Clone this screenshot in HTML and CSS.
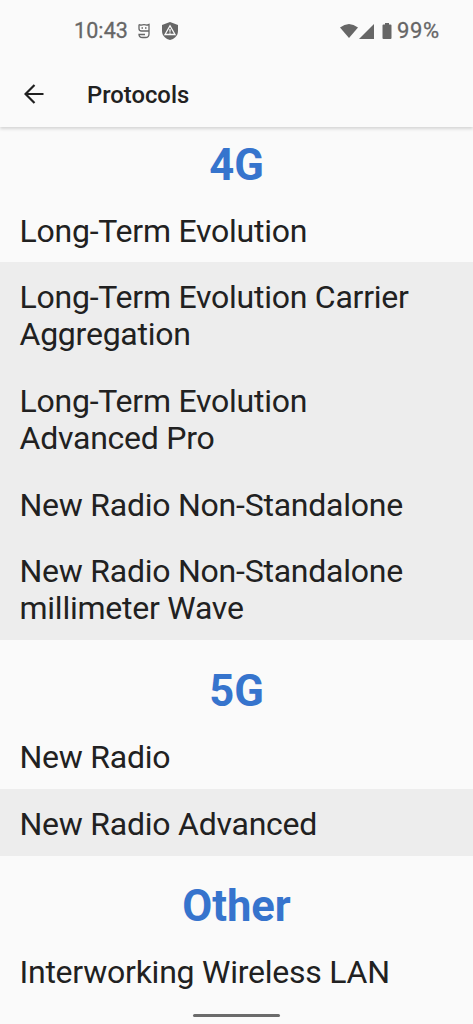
FILE: index.html
```html
<!DOCTYPE html>
<html lang="en">
<head>
<meta charset="utf-8">
<title>Protocols</title>
<link rel="stylesheet" href="styles.css">
</head>
<body>
<div class="status">
  <span class="time">10:43</span>
  <svg class="s-icon" width="12" height="16" viewBox="0 0 12 16" fill="none" stroke="#666" stroke-width="1.300"><path d="M1 1.500L3 2.200Q6 1 9 2.200L11 1.500V7.500M1 1.500V5.500Q1 8 3.500 8H11V11Q11 14.500 7.500 14.500H4.500Q1 14.500 1 11.500H7"/><path d="M3.500 5h1.500M7 5h1.500"/></svg>
  <svg class="shield" width="16" height="18" viewBox="0 0 16 18"><path fill="#666" d="M8 0l8 3v6c0 5-4 8-8 9-4-1-8-4-8-9V3z"/><path fill="none" stroke="#fafafa" stroke-width="1.300" d="M8 3.800l5 8.700H3zM8 7v2.700M8 10.400v1"/></svg>
  <span class="spacer"></span>
  <svg class="wifi" width="18" height="14" viewBox="0 0 18 14"><path fill="#666" d="M0 3.500Q9-3.500 18 3.500L9 14z"/></svg>
  <svg class="signal" width="15" height="15" viewBox="0 0 15 15"><path fill="#666" d="M15 0v15H0z"/></svg>
  <svg class="battery" width="10" height="16" viewBox="0 0 10 16"><path fill="#666" d="M3 0h4v1.500h1.500q1 0 1 1V15q0 1-1 1h-7q-1 0-1-1V2.500q0-1 1-1H3z"/></svg>
  <span class="percent">99%</span>
</div>
<header class="appbar">
  <svg class="back" width="20" height="20" viewBox="0 0 20 20" fill="none" stroke="#202020" stroke-width="2.200"><path d="M19.500 10H2M10.500 1L1.500 10l9 9"/></svg>
  <h1 class="title">Protocols</h1>
</header>
<main class="list">
  <h2 class="head first">4G</h2>
  <p class="row">Long-Term Evolution</p>
  <div class="shade">
    <p class="row">Long-Term Evolution Carrier Aggregation</p>
    <p class="row">Long-Term Evolution<br>Advanced Pro</p>
    <p class="row">New Radio Non-Standalone</p>
    <p class="row">New Radio Non-Standalone millimeter Wave</p>
  </div>
  <h2 class="head">5G</h2>
  <p class="row">New Radio</p>
  <div class="shade"><p class="row">New Radio Advanced</p></div>
  <h2 class="head">Other</h2>
  <p class="row">Interworking Wireless LAN</p>
</main>
<div class="handle"></div>
</body>
</html>
```
FILE: styles.css
```css
* { box-sizing: border-box; }
body { margin: 0; height: 1024px; overflow: hidden; position: relative; background: #fafafa; color: #212121; font-family: Roboto, sans-serif; }
.status { height: 62px; padding: 0 34px 0 74px; display: flex; align-items: center; color: #666; font-size: 21.5px; }
.time { width: 54px; margin-top: -2px; letter-spacing: .1px; -webkit-text-stroke: .3px #666; }
.s-icon { margin-left: 10px; }
.shield { margin-left: 12px; }
.spacer { flex: 1; }
.signal { margin-left: 1px; }
.battery { margin-left: 8px; }
.percent { margin-left: 5px; margin-top: -2px; width: 42px; font-size: 22px; letter-spacing: .6px; white-space: nowrap; -webkit-text-stroke: .3px #666; }
.appbar { height: 65px; display: flex; align-items: center; padding-left: 24px; box-shadow: 0 2px 3px rgba(0,0,0,.15); clip-path: inset(0 0 -8px 0); }
.back { margin-top: -2px; }
.title { margin: 1px 0 0 43px; font-size: 23.800px; font-weight: 500; }
.head { margin: 0; height: 82.300px; padding-top: 17.200px; text-align: center; color: #3674cd; font-size: 43.5px; line-height: 68px; font-weight: 700; }
.head.first { height: 69px; padding-top: 4.500px; }
.row { margin: 0; padding: 16.500px 20px 12.700px 19.500px; font-size: 32px; line-height: 37.300px; letter-spacing: -.24px; }
.shade { background: #ededed; }
.handle { position: absolute; left: 193px; bottom: 7px; width: 87px; height: 3px; border-radius: 2px; background: #6b6b6b; }
```
